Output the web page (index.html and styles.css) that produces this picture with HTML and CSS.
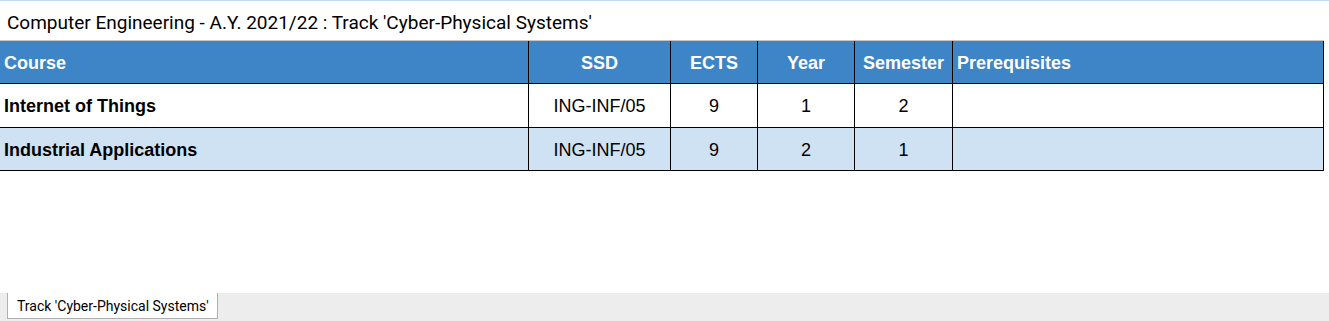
FILE: index.html
```html
<!DOCTYPE html>
<html lang="en">
<head>
<meta charset="utf-8">
<title>Computer Engineering - A.Y. 2021/22</title>
<link rel="stylesheet" href="styles.css">
</head>
<body>
<div class="page">
  <main class="sheet">
    <div class="sheet-title">Computer Engineering - A.Y. 2021/22 : Track 'Cyber-Physical Systems'</div>
    <div class="grid">
      <div class="cell head left">Course</div>
      <div class="cell head">SSD</div>
      <div class="cell head">ECTS</div>
      <div class="cell head">Year</div>
      <div class="cell head">Semester</div>
      <div class="cell head left">Prerequisites</div>

      <div class="cell row-a left strong">Internet of Things</div>
      <div class="cell row-a">ING-INF/05</div>
      <div class="cell row-a">9</div>
      <div class="cell row-a">1</div>
      <div class="cell row-a">2</div>
      <div class="cell row-a left"></div>

      <div class="cell row-b left strong">Industrial Applications</div>
      <div class="cell row-b">ING-INF/05</div>
      <div class="cell row-b">9</div>
      <div class="cell row-b">2</div>
      <div class="cell row-b">1</div>
      <div class="cell row-b left"></div>
    </div>
  </main>
  <nav class="tabbar">
    <div class="tab">Track 'Cyber-Physical Systems'</div>
  </nav>
</div>
</body>
</html>
```

FILE: styles.css
```css
* {
  box-sizing: border-box;
}

html, body {
  margin: 0;
  padding: 0;
  height: 100%;
  background: #ffffff;
}

.page {
  display: flex;
  flex-direction: column;
  height: 100vh;
}

.sheet {
  flex: 1;
  border-top: 1px solid #bfdbf5;
}

.sheet-title {
  height: 39px;
  display: flex;
  align-items: center;
  padding-left: 7px;
  padding-top: 4px;
  font-family: Roboto, "Liberation Sans", sans-serif;
  font-size: 19px;
  color: #000000;
}

.grid {
  display: grid;
  grid-template-columns: 529px 142px 87px 97px 98px 371px;
  grid-template-rows: 43px 44px 43px;
  width: 1324px;
  border-top: 1px solid #c6c6c6;
  font-family: "Liberation Sans", Arial, sans-serif;
  font-size: 18px;
}

.cell {
  display: flex;
  align-items: center;
  justify-content: center;
  padding-top: 2px;
  border-right: 1px solid #000000;
  border-bottom: 1px solid #000000;
  color: #000000;
  white-space: nowrap;
  overflow: hidden;
}

.cell.left {
  justify-content: flex-start;
  padding-left: 4px;
}

.head {
  background: #3d85c6;
  color: #ffffff;
  font-weight: bold;
}

.strong {
  font-weight: bold;
}

.row-a {
  background: #ffffff;
}

.row-b {
  background: #cfe2f3;
}

.tabbar {
  height: 28px;
  background: #ededed;
  padding-left: 7px;
  display: flex;
  align-items: flex-start;
}

.tab {
  height: 26px;
  display: flex;
  align-items: center;
  padding: 0 8px 0 9px;
  background: #ffffff;
  border: 1px solid #b0b0b0;
  border-top: none;
  font-family: Roboto, "Liberation Sans", sans-serif;
  font-size: 14px;
  color: #000000;
}
```
